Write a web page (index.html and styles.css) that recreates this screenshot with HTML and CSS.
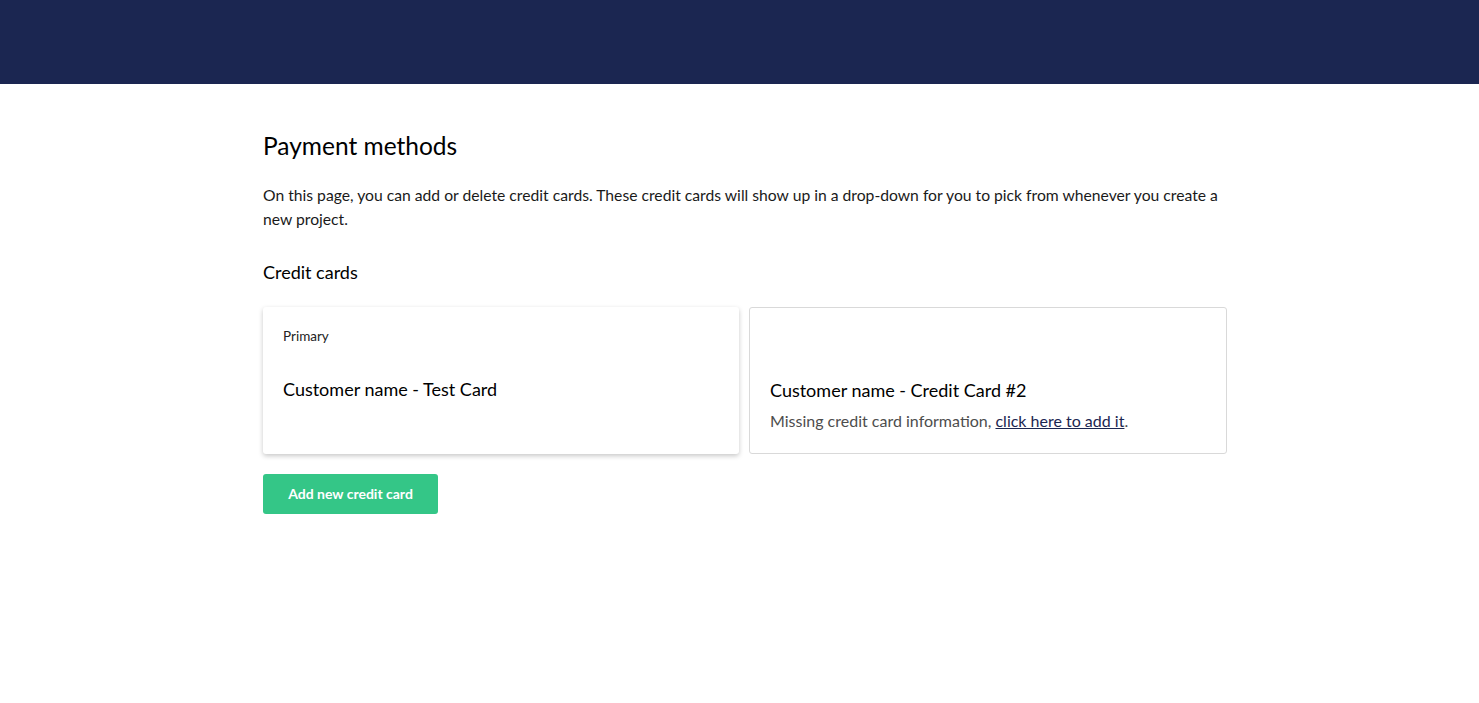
FILE: index.html
```
<!DOCTYPE html>
<html lang="en">
<head>
<meta charset="utf-8">
<title>Payment methods</title>
<link rel="stylesheet" href="styles.css">
</head>
<body>
<header class="topbar"></header>
<main class="page">
  <h1 class="title">Payment methods</h1>
  <p class="intro">On this page, you can add or delete credit cards. These credit cards will show up in a drop-down for you to pick from whenever you create a new project.</p>
  <h2 class="subtitle">Credit cards</h2>
  <div class="cards">
    <div class="card card-primary">
      <div class="card-label">Primary</div>
      <div class="card-name">Customer name - Test Card</div>
    </div>
    <div class="card card-missing">
      <div class="card-label"></div>
      <div class="card-name">Customer name - Credit Card #2</div>
      <div class="card-desc">Missing credit card information, <a href="#" class="card-link">click here to add it</a>.</div>
    </div>
  </div>
  <button class="btn-add" type="button">Add new credit card</button>
</main>
</body>
</html>
```
FILE: styles.css
```
* { box-sizing: border-box; }
html, body { margin: 0; padding: 0; background: #fff; }
body { font-family: Lato, "Open Sans", sans-serif; color: #111; }
.topbar { height: 84px; background: #1b2651; }
.page { width: 964px; margin-left: 263px; padding-bottom: 40px; }
.title { margin: 46px 0 0; font-size: 24.5px; line-height: 32px; font-weight: 400; color: #000; }
.intro { margin: 21px 0 0; font-size: 15.7px; line-height: 24px; color: #1a1a1a; }
.subtitle { margin: 29px 0 0; font-size: 18px; line-height: 24px; font-weight: 400; color: #000; }
.cards { display: flex; gap: 10px; margin-top: 23px; }
.card { flex: 1 1 0; border-radius: 3px; padding: 20px; background: #fff; }
.card-primary { box-shadow: 0 2px 5px rgba(0,0,0,0.22); }
.card-missing { border: 1px solid #d9d9d9; }
.card-label { height: 18px; font-size: 13.5px; line-height: 18px; color: #222; }
.card-name { margin-top: 32px; font-size: 18px; line-height: 24px; color: #000; }
.card-desc { margin-top: 7px; font-size: 16px; line-height: 24px; color: #4d4d4d; }
.card-link { color: #1b2651; text-decoration: underline; }
.btn-add { margin-top: 20px; width: 175px; height: 40px; border: 0; border-radius: 3px; background: #34c687; color: #fff; font-family: Lato, "Open Sans", sans-serif; font-weight: 700; font-size: 14px; line-height: 38px; cursor: pointer; padding: 0; }
```
